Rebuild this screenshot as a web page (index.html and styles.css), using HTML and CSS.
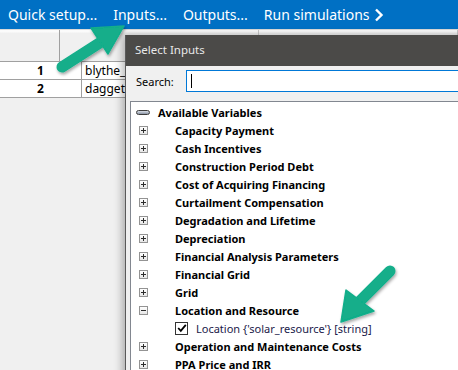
FILE: index.html
```html
<!DOCTYPE html>
<html lang="en">
<head>
  <meta charset="UTF-8">
  <title>Select Inputs</title>
  <link rel="stylesheet" href="styles.css">
</head>
<body>
  <div class="toolbar">
    <span class="tool">Quick setup...</span>
    <span class="tool">Inputs...</span>
    <span class="tool">Outputs...</span>
    <span class="tool">Run simulations
      <svg class="chevron" width="10" height="14" viewBox="0 0 10 14"><path d="M2 1.5 L7.5 7 L2 12.5" fill="none" stroke="#fff" stroke-width="2.4"/></svg>
    </span>
  </div>

  <div class="workspace">
    <div class="grid">
      <div class="grid-header">
        <div class="corner"></div>
        <div class="col-head"></div>
        <div class="col-head"></div>
      </div>
      <div class="grid-row">
        <div class="row-num">1</div>
        <div class="cell">blythe_daggett.csv</div>
      </div>
      <div class="grid-row">
        <div class="row-num">2</div>
        <div class="cell">daggett_ca.csv</div>
      </div>
    </div>

    <div class="dialog">
      <div class="dialog-title">Select Inputs</div>
      <div class="search-row">
        <span class="search-label">Search:</span>
        <div class="search-box"><span class="caret"></span></div>
      </div>
      <div class="tree">
        <div class="tree-root">
          <span class="collapse-pill"></span>
          <span class="root-label">Available Variables</span>
        </div>
        <div class="tree-item"><span class="toggle plus"></span><span class="group">Capacity Payment</span></div>
        <div class="tree-item"><span class="toggle plus"></span><span class="group">Cash Incentives</span></div>
        <div class="tree-item"><span class="toggle plus"></span><span class="group">Construction Period Debt</span></div>
        <div class="tree-item"><span class="toggle plus"></span><span class="group">Cost of Acquiring Financing</span></div>
        <div class="tree-item"><span class="toggle plus"></span><span class="group">Curtailment Compensation</span></div>
        <div class="tree-item"><span class="toggle plus"></span><span class="group">Degradation and Lifetime</span></div>
        <div class="tree-item"><span class="toggle plus"></span><span class="group">Depreciation</span></div>
        <div class="tree-item"><span class="toggle plus"></span><span class="group">Financial Analysis Parameters</span></div>
        <div class="tree-item"><span class="toggle plus"></span><span class="group">Financial Grid</span></div>
        <div class="tree-item"><span class="toggle plus"></span><span class="group">Grid</span></div>
        <div class="tree-item"><span class="toggle minus"></span><span class="group">Location and Resource</span></div>
        <div class="tree-leaf">
          <span class="checkbox">
            <svg width="10" height="10" viewBox="0 0 10 10"><path d="M1.2 5 L3.8 7.8 L8.8 1.8" fill="none" stroke="#000" stroke-width="1.8"/></svg>
          </span>
          <span class="leaf-label">Location {'solar_resource'} [string]</span>
        </div>
        <div class="tree-item"><span class="toggle plus"></span><span class="group">Operation and Maintenance Costs</span></div>
        <div class="tree-item"><span class="toggle plus"></span><span class="group">PPA Price and IRR</span></div>
      </div>
    </div>
  </div>

  <svg class="callouts" width="458" height="370" viewBox="0 0 458 370">
    <defs>
      <filter id="shade" x="-20%" y="-20%" width="140%" height="140%">
        <feDropShadow dx="1" dy="2" stdDeviation="1.6" flood-color="#000" flood-opacity="0.35"/>
      </filter>
    </defs>
    <g filter="url(#shade)" fill="#12ae8a" stroke="#12ae8a">
      <line x1="62" y1="67" x2="101" y2="42" stroke-width="11" stroke-linecap="round"/>
      <polygon points="124,26 91,28 108,54" stroke-width="1.5" stroke-linejoin="round"/>
      <line x1="390" y1="271" x2="360" y2="301" stroke-width="11" stroke-linecap="round"/>
      <polygon points="341,322 346,290 374,311" stroke-width="1.5" stroke-linejoin="round"/>
    </g>
  </svg>
</body>
</html>
```

FILE: styles.css
```css
body {
  margin: 0;
  width: 458px;
  height: 370px;
  overflow: hidden;
  position: relative;
  background-color: #f0f0f0;
  font-family: 'Segoe UI', 'Noto Sans', 'Open Sans', sans-serif;
  color: #000;
}

.toolbar {
  display: flex;
  align-items: center;
  gap: 16px;
  height: 29px;
  padding-left: 8px;
  background-color: #0070c4;
  color: #fff;
  font-size: 14px;
  white-space: nowrap;
}

.tool {
  display: flex;
  align-items: center;
  gap: 4px;
}

.chevron {
  margin-top: 1px;
}

.workspace {
  position: relative;
  height: 341px;
}

.grid {
  font-size: 12px;
}

.grid-header {
  display: flex;
  height: 31px;
  border-top: 1px solid #dadada;
  border-bottom: 1px solid #a0a0a0;
  background: linear-gradient(#fbfbfb 0, #fbfbfb 2px, #f0f0f0 3px);
}

.corner {
  width: 81px;
  border-right: 1px solid #a0a0a0;
}

.col-head {
  width: 271px;
  border-right: 1px solid #c8c8c8;
}

.grid-row {
  display: flex;
  height: 17px;
  width: 125px;
  border-bottom: 1px solid #a0a0a0;
  background-color: #fff;
}

.row-num {
  width: 81px;
  border-right: 1px solid #a0a0a0;
  text-align: center;
  line-height: 17px;
  font-weight: bold;
}

.cell {
  flex: 1;
  padding-left: 3px;
  line-height: 17px;
  white-space: nowrap;
  overflow: hidden;
}

.dialog {
  position: absolute;
  left: 125px;
  top: 6px;
  width: 360px;
  height: 360px;
  background-color: #f0f0f0;
  border-left: 1px solid #5a5a5a;
  box-shadow: -3px 0 8px rgba(0, 0, 0, 0.28);
}

.dialog-title {
  height: 31px;
  line-height: 30px;
  padding-left: 9px;
  background-color: #4b4a48;
  color: #e8e8e8;
  font-size: 11.5px;
}

.search-row {
  display: flex;
  align-items: center;
  height: 35px;
}

.search-label {
  width: 50px;
  padding-left: 10px;
  padding-bottom: 4px;
  font-size: 11px;
}

.search-box {
  flex: 1;
  height: 20px;
  margin-bottom: 5px;
  border: 1px solid #0078d7;
  background-color: #fff;
}

.caret {
  display: block;
  width: 1px;
  height: 14px;
  margin: 3px 0 0 4px;
  background-color: #000;
}

.tree {
  margin-left: 4px;
  height: 300px;
  padding-top: 1px;
  border: 1px solid #828790;
  background-color: #fff;
  font-size: 11px;
  white-space: nowrap;
}

.tree-root,
.tree-item,
.tree-leaf {
  display: flex;
  align-items: center;
  height: 18px;
}

.collapse-pill {
  width: 12px;
  height: 3px;
  margin-left: 5px;
  margin-right: 8px;
  border: 1px solid #3c3c3c;
  border-radius: 3px;
  background: linear-gradient(#d8dde6, #8a94a4);
}

.root-label,
.group {
  font-weight: bold;
}

.toggle {
  position: relative;
  width: 7px;
  height: 7px;
  margin-left: 8px;
  margin-right: 27px;
  border: 1px solid #939393;
  background: linear-gradient(#ffffff, #e6e6e6);
}

.toggle::before {
  content: '';
  position: absolute;
  left: 1px;
  top: 3px;
  width: 5px;
  height: 1px;
  background-color: #2c2c2c;
}

.plus::after {
  content: '';
  position: absolute;
  left: 3px;
  top: 1px;
  width: 1px;
  height: 5px;
  background-color: #2c2c2c;
}

.tree-leaf {
  padding-left: 44px;
}

.checkbox {
  display: flex;
  align-items: center;
  justify-content: center;
  width: 11px;
  height: 11px;
  margin-right: 8px;
  border: 1px solid #333;
  background-color: #fff;
}

.leaf-label {
  color: #1a1a4a;
}

.callouts {
  position: absolute;
  left: 0;
  top: 0;
  pointer-events: none;
}
```
